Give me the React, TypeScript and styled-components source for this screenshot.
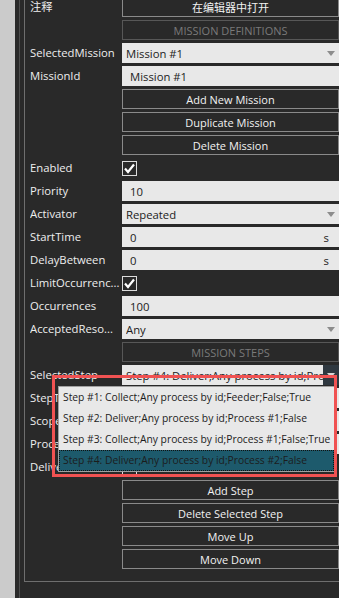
import React, { FC } from 'react';
import styled, { createGlobalStyle } from 'styled-components';

const GlobalStyle = createGlobalStyle`
  html, body {
    margin: 0;
    padding: 0;
    height: 100%;
    overflow: hidden;
    background: #292929;
  }
  body {
    font-family: "Open Sans", "Noto Sans CJK SC", sans-serif;
    font-size: 11px;
  }
`;

const Screen = styled.div`
  display: flex;
  height: 598px;
  overflow: hidden;
`;

const SideStrip = styled.div`
  width: 15px;
  flex-shrink: 0;
  background: #cbcbcb;
`;

const Panel = styled.div`
  flex: 1;
  min-width: 0;
  background: #292929;
  padding-left: 4px;
  display: flex;
`;

const Frame = styled.div`
  width: 318px;
  flex-shrink: 0;
  border-left: 1px solid #4d4d4d;
  border-right: 1px solid #555555;
  padding: 0 4px;
`;

const Group = styled.div`
  margin-top: -3px;
  border: 1px solid #6e6e6e;
  border-top: none;
  padding: 0 2px 12px 5px;
`;

const Form = styled.div`
  display: grid;
  grid-template-columns: 92px minmax(0, 1fr);
  grid-auto-rows: 20px;
  row-gap: 3px;
`;

const Label = styled.div`
  grid-column: 1;
  color: #eeeeee;
  font-size: 11.3px;
  line-height: 20px;
  white-space: nowrap;
  overflow: hidden;
`;

const Cell = styled.div`
  grid-column: 2;
  min-width: 0;
  position: relative;
  display: flex;
  align-items: center;
`;

const Button = styled.div`
  flex: 1;
  min-width: 0;
  height: 100%;
  box-sizing: border-box;
  border: 1px solid #8a8a8a;
  color: #f2f2f2;
  font-size: 11px;
  display: flex;
  align-items: center;
  justify-content: center;
`;

const Header = styled(Button)`
  border-color: #575757;
  color: #7a7a7a;
`;

const Field = styled.div<{ $pad?: number }>`
  flex: 1;
  min-width: 0;
  height: 100%;
  box-sizing: border-box;
  background: #e8e8e8;
  color: #1c1c1c;
  font-size: 11.3px;
  display: flex;
  align-items: center;
  padding-left: ${p => p.$pad ?? 8}px;
  padding-right: 6px;
  overflow: hidden;
  white-space: nowrap;
`;

const FieldText = styled.span`
  flex: 1;
  min-width: 0;
  overflow: hidden;
`;

const Suffix = styled.span`
  color: #1c1c1c;
  margin-right: 4px;
`;

const ArrowBox = styled.div<{ $open?: boolean }>`
  width: 16px;
  flex-shrink: 0;
  height: 100%;
  margin-right: -6px;
  display: flex;
  align-items: center;
  justify-content: center;
  background: ${p => (p.$open ? '#2f3840' : 'transparent')};
`;

const Check = styled.div`
  width: 15px;
  height: 15px;
  box-sizing: border-box;
  border: 1px solid #dcdcdc;
  display: flex;
  align-items: center;
  justify-content: center;
`;

const Popup = styled.div`
  position: absolute;
  top: 21px;
  left: -64px;
  width: 277px;
  box-sizing: border-box;
  background: #e8e8e8;
  border: 1px solid #a0a0a0;
  z-index: 2;
`;

const PopupItem = styled.div<{ $active?: boolean }>`
  height: 21px;
  box-sizing: border-box;
  padding-left: 3px;
  font-size: 10.3px;
  line-height: 19px;
  color: #1c1c1c;
  white-space: nowrap;
  overflow: hidden;
  background: ${p => (p.$active ? '#1d5a6c' : 'transparent')};
  border: 1px ${p => (p.$active ? 'dotted #111' : 'solid transparent')};
`;

const Callout = styled.div`
  position: absolute;
  top: 10px;
  left: -70px;
  width: 285px;
  height: 102px;
  box-sizing: border-box;
  border: 3px solid #f05252;
  z-index: 3;
  pointer-events: none;
`;

const Arrow: FC<{ light?: boolean }> = ({ light }) => (
  <svg width="8" height="5" viewBox="0 0 8 5">
    <path d="M0 0 L8 0 L4 5 Z" fill={light ? '#d8d8d8' : '#8c8c8c'} />
  </svg>
);

const Tick: FC = () => (
  <svg width="13" height="13" viewBox="0 0 13 13">
    <path d="M2 6.5 L5 10 L11 2.5" fill="none" stroke="#ffffff" strokeWidth="2.2" />
  </svg>
);

const Combo: FC<{ text: string }> = ({ text }) => (
  <Field $pad={4}>
    <FieldText>{text}</FieldText>
    <ArrowBox>
      <Arrow />
    </ArrowBox>
  </Field>
);

const TextBox: FC<{ text: string; suffix?: string }> = ({ text, suffix }) => (
  <Field>
    <FieldText>{text}</FieldText>
    {suffix && <Suffix>{suffix}</Suffix>}
  </Field>
);

const steps = [
  'Step #1: Collect;Any process by id;Feeder;False;True',
  'Step #2: Deliver;Any process by id;Process #1;False',
  'Step #3: Collect;Any process by id;Process #1;False;True',
  'Step #4: Deliver;Any process by id;Process #2;False',
];

const App: FC = () => {
  return (
    <Screen>
      <GlobalStyle />
      <SideStrip />
      <Panel>
        <Frame>
          <Group>
            <Form>
              <Label>注释</Label>
              <Cell><Button>在编辑器中打开</Button></Cell>

              <Cell><Header>MISSION DEFINITIONS</Header></Cell>

              <Label>SelectedMission</Label>
              <Cell><Combo text="Mission #1" /></Cell>

              <Label>MissionId</Label>
              <Cell><TextBox text="Mission #1" /></Cell>

              <Cell><Button>Add New Mission</Button></Cell>
              <Cell><Button>Duplicate Mission</Button></Cell>
              <Cell><Button>Delete Mission</Button></Cell>

              <Label>Enabled</Label>
              <Cell><Check><Tick /></Check></Cell>

              <Label>Priority</Label>
              <Cell><TextBox text="10" /></Cell>

              <Label>Activator</Label>
              <Cell><Combo text="Repeated" /></Cell>

              <Label>StartTime</Label>
              <Cell><TextBox text="0" suffix="s" /></Cell>

              <Label>DelayBetween</Label>
              <Cell><TextBox text="0" suffix="s" /></Cell>

              <Label>LimitOccurrenc...</Label>
              <Cell><Check><Tick /></Check></Cell>

              <Label>Occurrences</Label>
              <Cell><TextBox text="100" /></Cell>

              <Label>AcceptedReso...</Label>
              <Cell><Combo text="Any" /></Cell>

              <Cell><Header>MISSION STEPS</Header></Cell>

              <Label>SelectedStep</Label>
              <Cell>
                <Field $pad={4}>
                  <FieldText>Step #4: Deliver;Any process by id;Process #2;False</FieldText>
                  <ArrowBox $open>
                    <Arrow light />
                  </ArrowBox>
                </Field>
                <Popup>
                  {steps.map((s, i) => (
                    <PopupItem key={s} $active={i === steps.length - 1}>{s}</PopupItem>
                  ))}
                </Popup>
                <Callout />
              </Cell>

              <Label>StepType</Label>
              <Cell><Combo text="Deliver" /></Cell>

              <Label>Scope</Label>
              <Cell><Combo text="Any process by id" /></Cell>

              <Label>ProcessId</Label>
              <Cell><TextBox text="Process #2" /></Cell>

              <Label>DeliverAll...</Label>
              <Cell><Check /></Cell>

              <Cell><Button>Add Step</Button></Cell>
              <Cell><Button>Delete Selected Step</Button></Cell>
              <Cell><Button>Move Up</Button></Cell>
              <Cell><Button>Move Down</Button></Cell>
            </Form>
          </Group>
        </Frame>
      </Panel>
    </Screen>
  );
};

export default App;
